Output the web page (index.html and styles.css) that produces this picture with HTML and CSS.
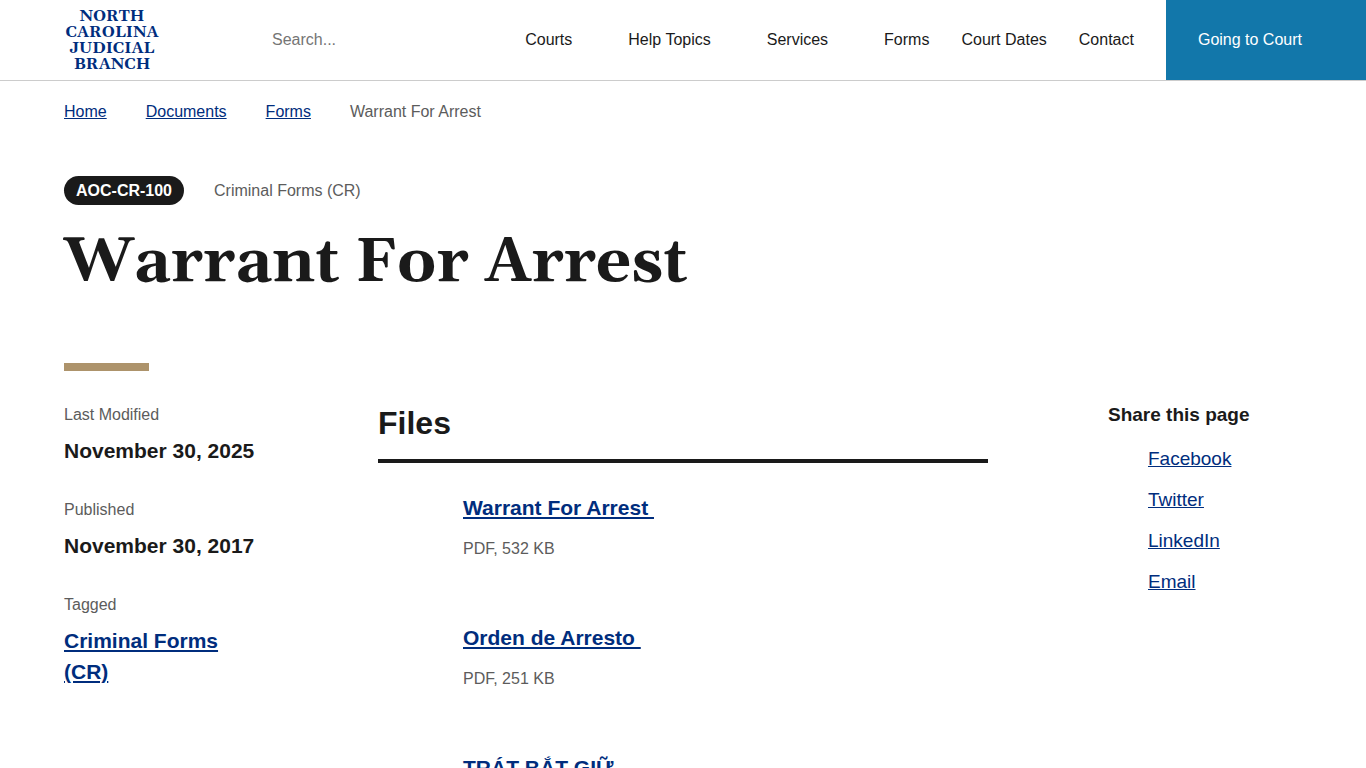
FILE: index.html
```html
<!DOCTYPE html>
<html lang="en">

<head>
    <meta charset="UTF-8">
    <meta name="viewport" content="width=device-width, initial-scale=1.0">
    <title>Warrant For Arrest | North Carolina Judicial Branch</title>
    <link rel="stylesheet" href="styles.css">
</head>

<body>
    <header class="site-header">
        <a class="logo" href="#">North Carolina Judicial Branch</a>
        <form class="search" role="search">
            <input type="search" aria-label="Search" placeholder="Search...">
        </form>
        <nav class="main-nav" aria-label="Main">
            <ul>
                <li class="has-menu"><a href="#">Courts</a></li>
                <li class="has-menu"><a href="#">Help Topics</a></li>
                <li class="has-menu"><a href="#">Services</a></li>
                <li><a href="#">Forms</a></li>
                <li><a href="#">Court Dates</a></li>
                <li><a href="#">Contact</a></li>
            </ul>
        </nav>
        <a class="going-to-court" href="#">Going to Court</a>
    </header>

    <nav class="breadcrumb" aria-label="Breadcrumb">
        <ol>
            <li><a href="#">Home</a></li>
            <li><a href="#">Documents</a></li>
            <li><a href="#">Forms</a></li>
            <li>Warrant For Arrest</li>
        </ol>
    </nav>

    <main>
        <div class="page-header">
            <div class="form-info">
                <span class="form-number">AOC-CR-100</span>
                <span>Criminal Forms (CR)</span>
            </div>
            <h1>Warrant For Arrest</h1>
        </div>

        <div class="page-content">
            <dl class="details">
                <dt>Last Modified</dt>
                <dd>November 30, 2025</dd>
                <dt>Published</dt>
                <dd>November 30, 2017</dd>
                <dt>Tagged</dt>
                <dd><a href="#">Criminal Forms (CR)</a></dd>
            </dl>

            <section class="files">
                <h2>Files</h2>
                <ul>
                    <li>
                        <h3><a href="#">Warrant For Arrest&nbsp;</a></h3>
                        <p>PDF, 532 KB</p>
                    </li>
                    <li>
                        <h3><a href="#">Orden de Arresto&nbsp;</a></h3>
                        <p>PDF, 251 KB</p>
                    </li>
                    <li>
                        <h3><a href="#">TRÁT BẮT GIỮ&nbsp;</a></h3>
                    </li>
                </ul>
            </section>

            <aside class="share">
                <h2>Share this page</h2>
                <ul>
                    <li><a href="#">Facebook</a></li>
                    <li><a href="#">Twitter</a></li>
                    <li><a href="#">LinkedIn</a></li>
                    <li><a href="#">Email</a></li>
                </ul>
            </aside>
        </div>
    </main>
</body>

</html>
```
FILE: styles.css
```css
* {
    box-sizing: border-box;
}

body {
    margin: 0;
    background: #fff;
    color: #1a1a1a;
    font-family: "Liberation Sans", Arial, sans-serif;
    font-size: 16px;
    line-height: 24px;
}

h1, h2, h3, p, ul, ol, dl, dd {
    margin: 0;
    padding: 0;
}

ul, ol {
    list-style: none;
}

a {
    color: #002d7d;
}

/* Header */
.site-header {
    display: flex;
    align-items: center;
    padding-left: 64px;
    border-bottom: 1px solid #ccc;
}

.logo {
    width: 96px;
    flex-shrink: 0;
    font-family: Gelasio, Georgia, "Liberation Serif", serif;
    font-size: 16px;
    font-weight: bold;
    line-height: 16px;
    text-align: center;
    text-decoration: none;
    text-transform: uppercase;
}

.search {
    flex: 1;
    margin-left: 112px;
}

.search input {
    width: 100%;
    padding: 0;
    border: 0;
    background: none;
    color: inherit;
    font: inherit;
}

.search input::placeholder {
    color: #757575;
}

.main-nav ul {
    display: flex;
}

.main-nav li {
    padding-right: 32px;
    white-space: nowrap;
}

.main-nav .has-menu {
    padding-right: 56px;
}

.main-nav a {
    color: #1a1a1a;
    text-decoration: none;
}

.going-to-court {
    padding: 0 64px 0 32px;
    background: #1277aa;
    color: #fff;
    line-height: 80px;
    text-decoration: none;
    white-space: nowrap;
}

/* Breadcrumb */
.breadcrumb {
    padding: 19px 64px 0;
    color: #5c5c5c;
}

.breadcrumb ol {
    display: flex;
    gap: 39px;
}

/* Page title */
.page-header {
    padding: 52px 64px 0;
}

.page-header::after {
    content: "";
    display: block;
    width: 85px;
    height: 8px;
    margin-top: 62px;
    background: #ad936b;
}

.form-info {
    display: flex;
    align-items: center;
    gap: 30px;
    color: #5c5c5c;
}

.form-number {
    padding: 0 12px;
    border-radius: 15px;
    background: #1a1a1a;
    color: #fff;
    font-weight: bold;
    line-height: 29px;
}

h1 {
    margin-top: 20px;
    font-family: Gelasio, Georgia, "Liberation Serif", serif;
    font-size: 62px;
    line-height: 76px;
}

/* Three column content */
.page-content {
    display: grid;
    grid-template-columns: 194px minmax(0, 1fr) 194px;
    gap: 120px;
    padding: 32px 64px 0;
}

.details dt {
    color: #5c5c5c;
}

.details dd {
    margin: 8px 0 32px;
    font-size: 21px;
    font-weight: bold;
    line-height: 31px;
}

.files h2 {
    padding-bottom: 15px;
    border-bottom: 4px solid #1a1a1a;
    font-size: 32px;
    line-height: 41px;
}

.files ul {
    padding: 29px 0 0 85px;
}

.files li {
    margin-bottom: 61px;
}

.files h3 {
    margin-bottom: 14px;
    font-size: 21px;
    line-height: 31px;
}

.files p {
    color: #5c5c5c;
}

.share h2 {
    font-size: 19px;
    line-height: 24px;
}

.share ul {
    display: grid;
    gap: 10px;
    margin-top: 16px;
    padding-left: 40px;
    font-size: 19px;
    line-height: 31px;
}
```
